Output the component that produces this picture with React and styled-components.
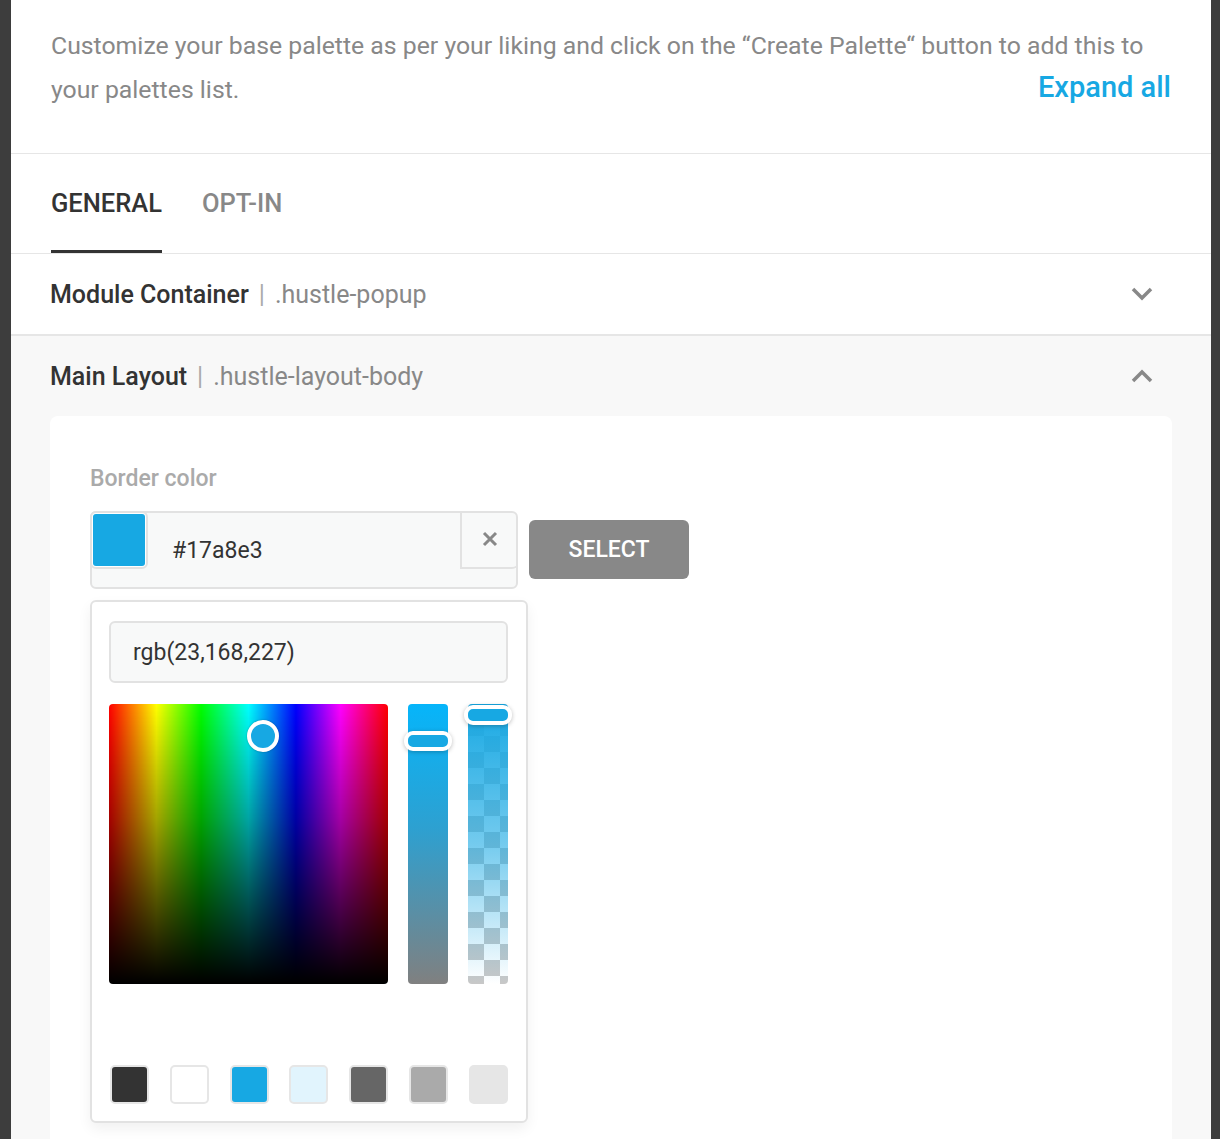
import React from "react"
import styled, { createGlobalStyle } from "styled-components"

const GlobalStyle = createGlobalStyle`
  html, body {
    margin: 0;
    padding: 0;
    background: #3d3d3d;
    font-family: Roboto, "Liberation Sans", sans-serif;
  }
`

const Modal = styled.div`
  width: 1200px;
  margin-left: 11px;
  background: #fff;
  min-height: 1139px;
`

const Header = styled.div`
  padding: 24px 40px 41px 40px;
  border-bottom: 1px solid #e6e6e6;
`

const HeaderBottom = styled.div`
  display: flex;
  justify-content: space-between;
  align-items: center;
`

const DescLine = styled.div`
  font-size: 24.8px;
  line-height: 44px;
  color: #888;
  white-space: nowrap;
`

const ExpandLink = styled.a`
  color: #17a8e3;
  font-size: 29px;
  font-weight: 500;
  line-height: 38px;
  margin-bottom: 6px;
  cursor: pointer;
`

const Tabs = styled.div`
  display: flex;
  gap: 40px;
  padding: 0 40px;
  height: 99px;
  border-bottom: 1px solid #e6e6e6;
`

const Tab = styled.div`
  display: flex;
  align-items: center;
  padding-top: 2px;
  font-size: 25.5px;
  font-weight: 500;
  color: ${(p) => (p.$active ? "#333" : "#888")};
  border-bottom: 3px solid ${(p) => (p.$active ? "#333" : "transparent")};
`

const Row = styled.div`
  display: flex;
  align-items: center;
  justify-content: space-between;
  height: 80px;
  padding: ${(p) => (p.$open ? "0 1px 0 0" : "0 40px 0 39px")};
  border-bottom: ${(p) => (p.$open ? "none" : "2px solid #e6e6e6")};
`

const RowTitle = styled.div`
  display: flex;
  align-items: center;
  gap: 10px;
  font-size: 25px;
  color: #333;
  font-weight: 500;
`

const RowSep = styled.span`
  color: #aaa;
  font-weight: 400;
`

const RowSub = styled.span`
  color: #888;
  font-weight: 400;
`

const Chevron = styled.svg`
  width: 22px;
  height: 14px;
  margin-right: 18px;
`

const OpenSection = styled.div`
  background: #f8f8f8;
  padding: 0 39px;
`

const Card = styled.div`
  background: #fff;
  border-radius: 8px 8px 0 0;
  padding: 49px 40px 60px;
  min-height: 800px;
`

const Label = styled.div`
  font-size: 23px;
  font-weight: 500;
  color: #aaa;
  margin-bottom: 19px;
`

const FieldRow = styled.div`
  display: flex;
  align-items: flex-start;
  gap: 11px;
`

const InputGroup = styled.div`
  display: flex;
  align-items: center;
  width: 428px;
  height: 78px;
  box-sizing: border-box;
  border: 2px solid #e2e2e2;
  border-radius: 6px;
  background: #f8f9f9;
`

const SwatchBox = styled.div`
  align-self: flex-start;
  width: 58px;
  height: 58px;
  margin: -2px 0 0 -2px;
  box-sizing: border-box;
  border: 2px solid #e2e2e2;
  border-radius: 6px;
  background: #fff;
  padding: 1px;
`

const SwatchFill = styled.div`
  width: 100%;
  height: 100%;
  border-radius: 3px;
  background: #17a8e3;
`

const HexText = styled.div`
  flex: 1;
  padding-left: 24px;
  font-size: 23px;
  color: #333;
`

const ClearButton = styled.div`
  align-self: flex-start;
  width: 58px;
  height: 58px;
  margin: -2px -2px 0 0;
  box-sizing: border-box;
  display: flex;
  align-items: center;
  justify-content: center;
  border-left: 2px solid #e2e2e2;
  border-bottom: 2px solid #e2e2e2;
  border-radius: 0 6px 6px 0;
`

const SelectButton = styled.button`
  margin-top: 9px;
  width: 160px;
  height: 59px;
  border: none;
  border-radius: 6px;
  background: #888;
  color: #fff;
  font-family: Roboto, "Liberation Sans", sans-serif;
  font-size: 23px;
  font-weight: 500;
`

const Picker = styled.div`
  margin-top: 11px;
  width: 438px;
  box-sizing: border-box;
  border: 2px solid #e2e2e2;
  border-radius: 6px;
  padding: 19px 18px 17px 17px;
  background: #fff;
  box-shadow: 0 6px 14px rgba(0, 0, 0, 0.06);
`

const RgbInput = styled.div`
  height: 62px;
  box-sizing: border-box;
  border: 2px solid #e2e2e2;
  border-radius: 6px;
  background: #f8f9f9;
  display: flex;
  align-items: center;
  padding-left: 22px;
  font-size: 23px;
  color: #333;
`

const PickerBody = styled.div`
  display: flex;
  gap: 20px;
  margin-top: 21px;
`

const Saturation = styled.div`
  position: relative;
  width: 280px;
  height: 280px;
  border-radius: 4px;
  background: linear-gradient(to bottom, rgba(0, 0, 0, 0) 0%, rgba(0, 0, 0, 0.35) 40%, #000 100%),
    linear-gradient(
      to right,
      #f00 0%,
      #ff0 17%,
      #0f0 33%,
      #0ff 50%,
      #00f 67%,
      #f0f 83%,
      #f00 100%
    );
`

const SatHandle = styled.div`
  position: absolute;
  left: 138px;
  top: 16px;
  width: 24px;
  height: 24px;
  border-radius: 50%;
  border: 4px solid #fff;
  background: #17a8e3;
  box-shadow: 0 0 2px rgba(0, 0, 0, 0.3);
`

const Slider = styled.div`
  position: relative;
  width: 40px;
  height: 280px;
  border-radius: 4px;
  background: ${(p) => p.$bg};
`

const SliderHandle = styled.div`
  position: absolute;
  left: -4px;
  top: ${(p) => p.$top}px;
  width: 40px;
  height: 12px;
  border: 4px solid #fff;
  border-radius: 9px;
  background: #17a8e3;
  box-shadow: 0 1px 4px rgba(0, 0, 0, 0.25);
`

const Swatches = styled.div`
  display: flex;
  justify-content: space-between;
  margin-top: 81px;
  padding-left: 1px;
`

const Swatch = styled.div`
  width: 39px;
  height: 39px;
  box-sizing: border-box;
  border-radius: 5px;
  border: 2px solid ${(p) => (p.$plain ? p.$color : "#e6e6e6")};
  background: ${(p) => p.$color};
`

const checker =
  "repeating-conic-gradient(#c8c8c8 0% 25%, #fff 0% 50%) 0 0 / 32px 32px"

const ChevronDown = () => (
  <Chevron viewBox="0 0 22 14">
    <polyline points="2,2 11,11 20,2" fill="none" stroke="#888" strokeWidth="3.5" />
  </Chevron>
)

const ChevronUp = () => (
  <Chevron viewBox="0 0 22 14">
    <polyline points="2,12 11,3 20,12" fill="none" stroke="#888" strokeWidth="3.5" />
  </Chevron>
)

const swatchColors = ["#333333", "#ffffff", "#17a8e3", "#e1f4fd", "#666666", "#aaaaaa"]

const App = () => {
  return (
    <React.Fragment>
      <GlobalStyle />
      <Modal>
        <Header>
          <DescLine>
            Customize your base palette as per your liking and click on the “Create Palette“ button
            to add this to
          </DescLine>
          <HeaderBottom>
            <DescLine>your palettes list.</DescLine>
            <ExpandLink>Expand all</ExpandLink>
          </HeaderBottom>
        </Header>

        <Tabs>
          <Tab $active>GENERAL</Tab>
          <Tab>OPT-IN</Tab>
        </Tabs>

        <Row>
          <RowTitle>
            Module Container <RowSep>|</RowSep> <RowSub>.hustle-popup</RowSub>
          </RowTitle>
          <ChevronDown />
        </Row>

        <OpenSection>
          <Row $open>
            <RowTitle>
              Main Layout <RowSep>|</RowSep> <RowSub>.hustle-layout-body</RowSub>
            </RowTitle>
            <ChevronUp />
          </Row>

          <Card>
            <Label>Border color</Label>
            <FieldRow>
              <InputGroup>
                <SwatchBox>
                  <SwatchFill />
                </SwatchBox>
                <HexText>#17a8e3</HexText>
                <ClearButton>
                  <svg width="16" height="16" viewBox="0 0 16 16">
                    <path d="M2 2 L14 14 M14 2 L2 14" stroke="#888" strokeWidth="3" />
                  </svg>
                </ClearButton>
              </InputGroup>
              <SelectButton>SELECT</SelectButton>
            </FieldRow>

            <Picker>
              <RgbInput>rgb(23,168,227)</RgbInput>
              <PickerBody>
                <Saturation>
                  <SatHandle />
                </Saturation>
                <Slider $bg="linear-gradient(to bottom, #06b5fa, #2ea0d0 45%, #808080)">
                  <SliderHandle $top={27} />
                </Slider>
                <Slider
                  $bg={`linear-gradient(to bottom, rgba(23,168,227,1), rgba(23,168,227,0.6) 50%, rgba(23,168,227,0)), ${checker}`}
                >
                  <SliderHandle $top={1} />
                </Slider>
              </PickerBody>
              <Swatches>
                {swatchColors.map((c) => (
                  <Swatch key={c} $color={c} />
                ))}
                <Swatch $color="#e6e6e6" $plain />
              </Swatches>
            </Picker>
          </Card>
        </OpenSection>
      </Modal>
    </React.Fragment>
  )
}

export default App
